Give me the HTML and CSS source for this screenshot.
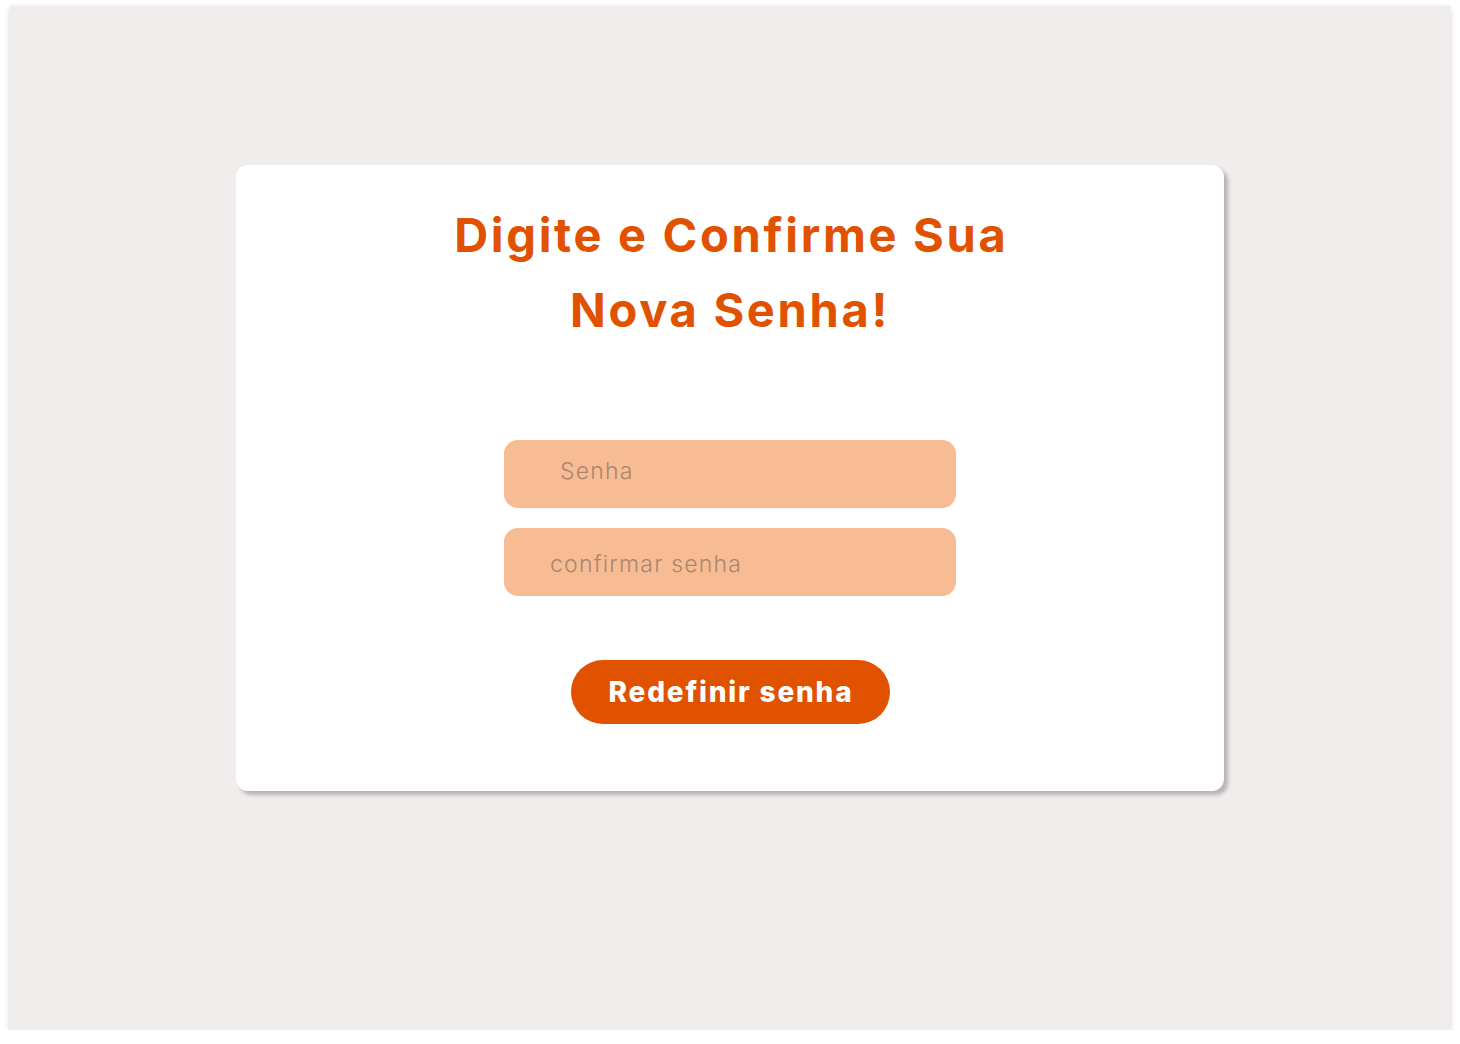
FILE: index.html
```html
<!DOCTYPE html>
<html lang="pt-BR">
<head>
<meta charset="utf-8">
<title>Redefinir senha</title>
<link rel="stylesheet" href="styles.css">
</head>
<body>
<div class="frame">
  <main class="card">
    <h1 class="title">Digite e Confirme Sua<br>Nova Senha!</h1>
    <form class="form">
      <input class="field field-senha" type="password" placeholder="Senha">
      <input class="field field-confirm" type="password" placeholder="confirmar senha">
      <button class="submit" type="button">Redefinir senha</button>
    </form>
  </main>
</div>
</body>
</html>
```
FILE: styles.css
```css
* { box-sizing: border-box; }
html, body { margin: 0; padding: 0; background: #ffffff; }
body { font-family: "Inter", "Noto Sans", sans-serif; }
.frame {
  margin: 6px 10px 0 10px;
  width: 1440px;
  height: 1024px;
  background: #f2eded;
  box-shadow: 0 2px 6px rgba(0,0,0,0.18);
  padding-top: 159px;
  display: flex;
  flex-direction: column;
  align-items: center;
}
.card {
  width: 988px;
  height: 626px;
  background: #ffffff;
  border-radius: 12px;
  box-shadow: 4px 4px 4px rgba(0,0,0,0.25);
  padding-top: 32px;
  display: flex;
  flex-direction: column;
  align-items: center;
}
.title {
  margin: 0;
  font-size: 47px;
  line-height: 75px;
  font-weight: 700;
  color: #e05100;
  text-align: center;
  letter-spacing: 2.7px;
  text-indent: 2.7px;
}
.form {
  margin-top: 93px;
  display: flex;
  flex-direction: column;
  align-items: center;
}
.field {
  width: 452px;
  height: 68px;
  border: none;
  outline: none;
  border-radius: 14px;
  background: #f7bc93;
  font-family: "Inter", "Noto Sans", sans-serif;
  font-weight: 300;
  font-size: 23px;
  letter-spacing: 1.2px;
  color: #9a7862;
}
.field::placeholder { color: #a98670; opacity: 1; }
.field-senha { padding: 0 0 6px 56px; }
.field-confirm { margin-top: 20px; padding: 3px 0 0 46px; }
.submit {
  margin-top: 64px;
  width: 319px;
  height: 64px;
  border: none;
  border-radius: 32px;
  background: #e05100;
  color: #ffffff;
  font-family: "Inter", "Noto Sans", sans-serif;
  font-weight: 800;
  font-size: 28px;
  letter-spacing: 1.8px;
  padding: 0 0 0 2px;
}
```
